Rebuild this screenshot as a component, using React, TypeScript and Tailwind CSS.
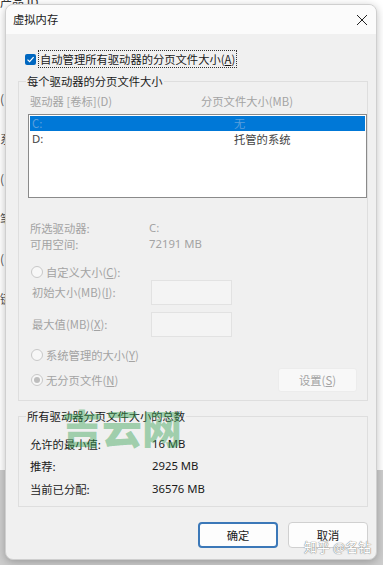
import React from "react";

const cjk = { fontFamily: '"Noto Sans CJK SC", "Noto Sans", sans-serif' };
const latin = { fontFamily: '"Noto Sans", sans-serif' };

const Radio = ({ checked }: { checked?: boolean }) => (
  <span className="flex h-[12px] w-[12px] items-center justify-center rounded-full border border-[#c8c8c8] bg-[#f7f7f7]">
    {checked && <span className="h-[6px] w-[6px] rounded-full bg-[#bdbdbd]" />}
  </span>
);

const Field = () => (
  <div className="h-[25px] w-[81px] border border-[#e2e2e2] bg-[#f4f4f4]" />
);

const GroupBox = ({
  title,
  children,
  className,
}: {
  title: string;
  children: React.ReactNode;
  className?: string;
}) => (
  <fieldset className={"w-[350px] border border-[#dedede] " + (className ?? "")}>
    <legend className="ml-[7px] px-[1px] text-[11.3px] leading-[14px] text-[#1a1a1a]">
      {title}
    </legend>
    {children}
  </fieldset>
);

export default function App() {
  return (
    <div
      className="relative h-[565px] w-[383px] overflow-hidden bg-[linear-gradient(to_bottom,#ffffff_470px,#cdcdcd_470px)] pt-[4px] pl-[5px]"
      style={cjk}
    >
      {/* window behind the dialog */}
      <div className="absolute left-[0px] top-[-5px] text-[12px] leading-[14px] text-[#333]">产品 ID</div>
      <div className="absolute left-[0px] top-[90px] flex flex-col gap-[22px] text-[12px] text-[#555]">
        <span>(</span>
        <span>系</span>
        <span>(</span>
        <span>笔</span>
        <span>(</span>
        <span>键</span>
      </div>

      <div className="relative flex h-[556px] w-[372px] flex-col overflow-hidden rounded-[8px] border border-[#cfcfcf] bg-[#f0f0f0] shadow-[0_2px_8px_rgba(0,0,0,0.25)]">
        {/* title bar */}
        <div className="flex h-[29px] items-center justify-between bg-[#fbfbfb] pl-[7px] pr-[8px]">
          <span className="text-[11.3px] text-[#1a1a1a]">虚拟内存</span>
          <svg width="12" height="12" viewBox="0 0 12 12" className="text-[#222]">
            <path d="M1 1 L11 11 M11 1 L1 11" stroke="currentColor" strokeWidth="1" fill="none" />
          </svg>
        </div>

        <div className="flex flex-1 flex-col pl-[12px]">
          {/* auto manage */}
          <div className="mt-[16px] flex h-[18px] items-center pl-[7px]">
            <span className="flex h-[11px] w-[11px] items-center justify-center rounded-[2px] bg-[#0067c0]">
              <svg width="9" height="9" viewBox="0 0 9 9">
                <path d="M1.5 4.6 L3.6 6.6 L7.6 2.2" stroke="#fff" strokeWidth="1.2" fill="none" />
              </svg>
            </span>
            <span className="ml-[2px] flex h-[18px] items-center border border-dotted border-[#333] px-[1px] text-[11.3px] text-[#1a1a1a]">
              自动管理所有驱动器的分页文件大小(<span className="underline">A</span>)
            </span>
          </div>

          <GroupBox title="每个驱动器的分页文件大小" className="mt-[6px] pb-[8px]">
            <div className="mt-[6px] flex h-[14px] items-center pl-[11px] text-[11.3px] text-[#a3a3a3]">
              <span className="w-[171px]">驱动器 [卷标](D)</span>
              <span>分页文件大小(MB)</span>
            </div>
            <div className="ml-[9px] mt-[6px] h-[84px] border border-[#8a8a8a] bg-white p-[1px]">
              <div className="flex h-[15px] items-center bg-[#0078d7] pl-[2px] text-[11.3px] text-[#5b9fdc]">
                <span className="w-[202px]">C:</span>
                <span>无</span>
              </div>
              <div className="flex h-[17px] items-center pl-[2px] text-[11.3px] text-[#444]">
                <span className="w-[202px]" style={latin}>D:</span>
                <span>托管的系统</span>
              </div>
            </div>

            <div className="mt-[23px] flex h-[14px] items-center pl-[11px] text-[11.3px] text-[#a3a3a3]">
              <span className="w-[119px]">所选驱动器:</span>
              <span style={latin}>C:</span>
            </div>
            <div className="mt-[2px] flex h-[14px] items-center pl-[11px] text-[11.3px] text-[#a3a3a3]">
              <span className="w-[119px]">可用空间:</span>
              <span style={latin}>72191 MB</span>
            </div>

            <div className="mt-[14px] flex h-[14px] items-center gap-[3px] pl-[12px] text-[11.3px] text-[#a3a3a3]">
              <Radio />
              <span>
                自定义大小(<span className="underline">C</span>):
              </span>
            </div>
            <div className="mt-[1px] flex h-[25px] items-center pl-[13px] text-[11.3px] text-[#a3a3a3]">
              <span className="w-[119px]">
                初始大小(MB)(<span className="underline">I</span>):
              </span>
              <Field />
            </div>
            <div className="mt-[7px] flex h-[25px] items-center pl-[13px] text-[11.3px] text-[#a3a3a3]">
              <span className="w-[119px]">
                最大值(MB)(<span className="underline">X</span>):
              </span>
              <Field />
            </div>

            <div className="mt-[11px] flex h-[14px] items-center gap-[3px] pl-[12px] text-[11.3px] text-[#a3a3a3]">
              <Radio />
              <span>
                系统管理的大小(<span className="underline">Y</span>)
              </span>
            </div>
            <div className="mt-[6px] flex h-[24px] items-center pl-[12px] pr-[10px] text-[11.3px] text-[#a3a3a3]">
              <Radio checked />
              <span className="ml-[3px] flex-1">
                无分页文件(<span className="underline">N</span>)
              </span>
              <span className="flex h-[24px] w-[79px] items-center justify-center rounded-[3px] border border-[#ececec] bg-[#f8f8f8]">
                设置(<span className="underline">S</span>)
              </span>
            </div>
          </GroupBox>

          <GroupBox title="所有驱动器分页文件大小的总数" className="mt-[8px] pb-[10px]">
            <div className="mt-[14px] flex h-[14px] items-center pl-[11px] text-[11.3px] text-[#1a1a1a]">
              <span className="w-[122px]">允许的最小值:</span>
              <span style={latin}>16 MB</span>
            </div>
            <div className="mt-[8px] flex h-[14px] items-center pl-[11px] text-[11.3px] text-[#1a1a1a]">
              <span className="w-[122px]">推荐:</span>
              <span style={latin}>2925 MB</span>
            </div>
            <div className="mt-[9px] flex h-[14px] items-center pl-[11px] text-[11.3px] text-[#1a1a1a]">
              <span className="w-[122px]">当前已分配:</span>
              <span style={latin}>36576 MB</span>
            </div>
          </GroupBox>

          <div className="mt-[15px] flex justify-end gap-[10px] pr-[8px]">
            <button className="flex h-[26px] w-[80px] items-center justify-center rounded-[4px] border-2 border-[#3b78b8] bg-[#fdfdfd] text-[11.3px] text-[#1a1a1a]">
              确定
            </button>
            <button className="flex h-[26px] w-[80px] items-center justify-center rounded-[4px] border border-[#d0d0d0] bg-[#fdfdfd] text-[11.3px] text-[#1a1a1a]">
              取消
            </button>
          </div>
        </div>

        {/* watermarks */}
        <span className="pointer-events-none absolute left-[56px] top-[400px] whitespace-nowrap text-[40px] font-black leading-[44px] text-[#3aa455]/45">
          吉云网
        </span>
        <span className="pointer-events-none absolute left-[298px] top-[534px] text-[13px] leading-[16px] text-white [text-shadow:0_0_1px_#777,0_0_1px_#777]">
          知乎 @名钻
        </span>
      </div>
    </div>
  );
}
